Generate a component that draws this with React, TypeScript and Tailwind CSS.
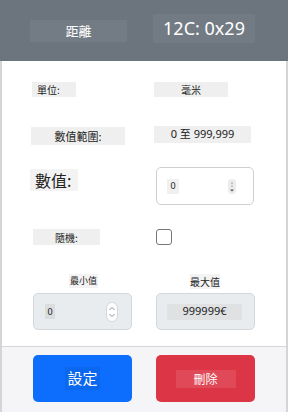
function Spin({ light }: { light?: boolean }) {
  if (light) {
    return (
      <div className="ml-auto mr-[13px] flex h-[20px] w-[12px] flex-col items-center justify-center rounded-[6px] border border-[#d6d8db] bg-white">
        <svg width="8" height="16" viewBox="0 0 8 16" fill="none" stroke="#8a9096" strokeWidth="1">
          <path d="M1.5 6 L4 3.5 L6.5 6" />
          <path d="M1.5 10 L4 12.5 L6.5 10" />
        </svg>
      </div>
    );
  }
  return (
    <div className="ml-auto mr-[17px] flex h-[15px] w-[8px] items-center justify-center rounded-[4px] bg-[#ececec]">
      <svg width="6" height="13" viewBox="0 0 6 13" fill="#555">
        <circle cx="3" cy="3" r="0.6" />
        <circle cx="3" cy="6" r="0.6" />
        <path d="M1 9.5 H5 L3 11.5 Z" />
      </svg>
    </div>
  );
}

export default function App() {
  return (
    <div className="flex h-[412px] w-[288px] flex-col overflow-hidden bg-white font-['Noto_Sans','Noto_Sans_CJK_TC',sans-serif] text-[#222]">
      <div className="flex h-[61px] shrink-0 items-start bg-[#6c757d] text-white">
        <div className="ml-[30px] mt-[20px] flex h-[22px] w-[97px] items-center justify-center bg-[#737c84] text-[13px] font-['Noto_Sans_CJK_TC',sans-serif]">
          距離
        </div>
        <div className="ml-[26px] mt-[14px] flex h-[29px] w-[102px] items-center justify-center bg-[#727b83] text-[18px]">
          12C: 0x29
        </div>
      </div>

      <div className="flex flex-1 flex-col border-x-2 border-[#d3d5d8] pl-[28px] font-['Noto_Sans_CJK_TC',sans-serif]">
        <div className="mt-[21px] flex items-start">
          <div className="ml-[2px] flex h-[15px] w-[44px] items-center pl-[5px] text-[10px] bg-[#efefef]">單位:</div>
          <div className="ml-[78px] flex h-[15px] w-[74px] items-center justify-center bg-[#efefef] text-[10px]">毫米</div>
        </div>

        <div className="mt-[29px] flex items-start">
          <div className="ml-[1px] mt-[1px] flex h-[18px] w-[94px] items-center justify-center bg-[#efefef] text-[11px]">數值範圍:</div>
          <div className="ml-[29px] flex h-[17px] w-[97px] items-center justify-center bg-[#efefef] text-[11px] font-['Noto_Sans','Noto_Sans_CJK_TC',sans-serif]">0 至 999,999</div>
        </div>

        <div className="mt-[22px] flex items-start">
          <div className="mt-[2px] flex h-[22px] w-[48px] items-center pl-[5px] bg-[#f3f3f3] text-[16px]">數值:</div>
          <div className="ml-[78px] flex h-[38px] w-[98px] items-center rounded-[5px] border border-[#cdd0d3] bg-white">
            <div className="ml-[10px] flex h-[15px] w-[12px] items-center justify-center bg-[#f0f0f0] text-[9px] font-['Noto_Sans',sans-serif]">0</div>
            <Spin />
          </div>
        </div>

        <div className="mt-[24px] flex items-start">
          <div className="ml-[3px] flex h-[16px] w-[67px] items-center justify-center bg-[#efefef] text-[10px]">隨機:</div>
          <div className="ml-[56px] h-[16px] w-[16px] rounded-[3px] border border-[#777] bg-white" />
        </div>

        <div className="mt-[29px] flex items-start">
          <div className="ml-[39px] flex h-[14px] w-[29px] items-center justify-center whitespace-nowrap bg-[#f3f3f3] text-[9px]">最小值</div>
          <div className="ml-[92px] flex h-[15px] w-[30px] items-center justify-center whitespace-nowrap bg-[#f3f3f3] text-[10px]">最大值</div>
        </div>

        <div className="mt-[4px] flex items-start">
          <div className="ml-[3px] flex h-[37px] w-[99px] items-center rounded-[5px] border border-[#d4d7da] bg-[#e9ecef]">
            <div className="ml-[11px] flex h-[15px] w-[10px] items-center justify-center bg-[#dadcde] text-[9px] font-['Noto_Sans',sans-serif]">0</div>
            <Spin light />
          </div>
          <div className="ml-[24px] flex h-[37px] w-[99px] items-center rounded-[5px] border border-[#d4d7da] bg-[#e9ecef]">
            <div className="ml-[10px] flex h-[16px] w-[75px] items-center justify-center bg-[#dfe1e3] text-[11px] font-['Noto_Sans',sans-serif]">999999€</div>
          </div>
        </div>
      </div>

      <div className="flex h-[66px] shrink-0 items-start border-x-2 border-t border-[#d3d5d8] bg-[#f5f5f7] font-['Noto_Sans_CJK_TC',sans-serif]">
        <div className="ml-[31px] mt-[8px] flex h-[47px] w-[99px] items-center justify-center rounded-[5px] bg-[#0d6efd] text-white">
          <span className="bg-[#0b67ee] px-[2px] text-[15px]">設定</span>
        </div>
        <div className="ml-[24px] mt-[8px] flex h-[47px] w-[99px] items-center justify-center rounded-[5px] bg-[#dc3545] text-white">
          <span className="flex h-[18px] w-[60px] items-center justify-center bg-[#e04957] text-[12px]">刪除</span>
        </div>
      </div>
    </div>
  );
}
